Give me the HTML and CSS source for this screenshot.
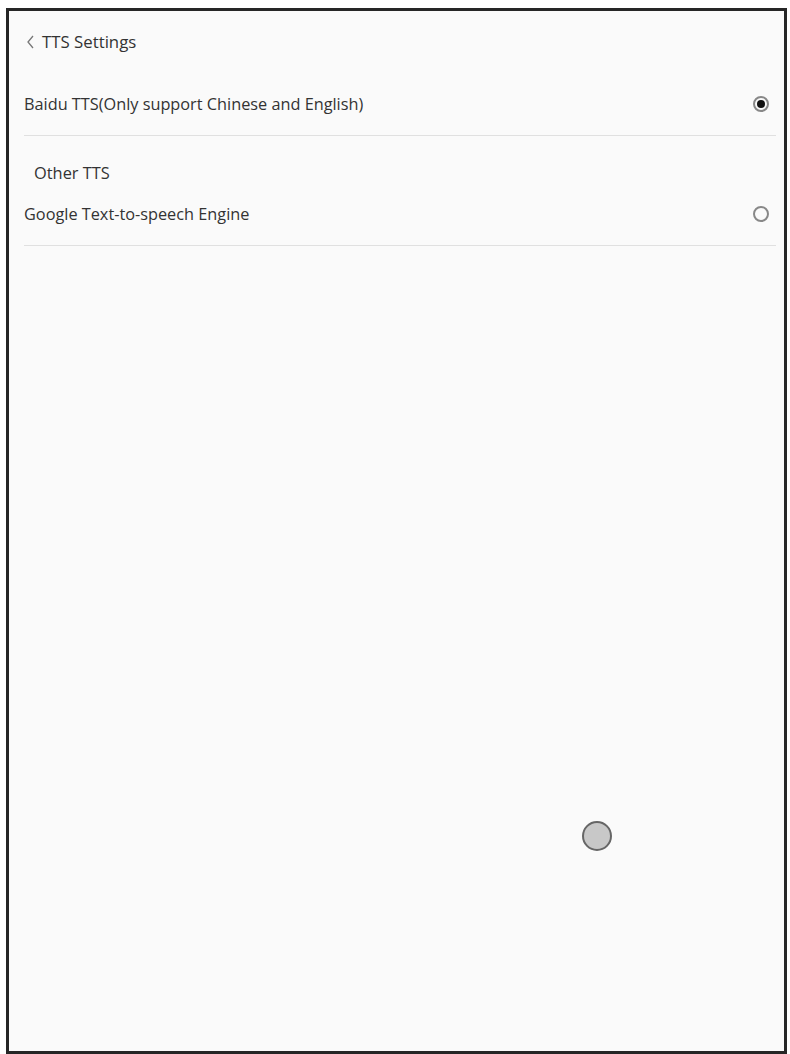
FILE: index.html
```html
<!DOCTYPE html>
<html>
<head>
<meta charset="utf-8">
<link rel="stylesheet" href="styles.css">
</head>
<body>
<div class="frame">
  <div class="header">
    <svg class="back" width="7" height="14" viewBox="0 0 7 14"><path d="M6 1 L1 7 L6 13" fill="none" stroke="#777" stroke-width="1.3"/></svg>
    <span class="title">TTS Settings</span>
  </div>
  <div class="row">
    <span class="label">Baidu TTS(Only support Chinese and English)</span>
    <span class="radio checked"></span>
  </div>
  <div class="section">Other TTS</div>
  <div class="row">
    <span class="label">Google Text-to-speech Engine</span>
    <span class="radio"></span>
  </div>
  <div class="canvas">
    <span class="touch"></span>
  </div>
</div>
</body>
</html>
```
FILE: styles.css
```css
html, body {
  margin: 0;
  padding: 0;
  background: #ffffff;
  width: 790px;
  height: 1054px;
  overflow: hidden;
}
body {
  padding: 8px 3px 0 6px;
  box-sizing: border-box;
  font-family: "Open Sans", "Noto Sans", sans-serif;
  color: #333;
}
.frame {
  height: 1046px;
  border: 3px solid #262626;
  background: #fafafa;
  box-sizing: border-box;
  display: flex;
  flex-direction: column;
  padding: 0 8px 0 15px;
}
.header {
  display: flex;
  align-items: center;
  height: 61px;
  padding-left: 3px;
  gap: 8px;
}
.title {
  font-size: 16.8px;
  color: #333;
}
.row {
  display: flex;
  align-items: center;
  justify-content: space-between;
  height: 64px;
  border-bottom: 1px solid #e0e0e0;
  padding-right: 7px;
  box-sizing: border-box;
}
.label {
  font-size: 16.3px;
  color: #333;
}
.radio {
  width: 16px;
  height: 16px;
  border-radius: 50%;
  border: 2px solid #888;
  box-sizing: border-box;
  display: flex;
  align-items: center;
  justify-content: center;
}
.radio.checked::after {
  content: "";
  width: 8px;
  height: 8px;
  border-radius: 50%;
  background: #111;
}
.section {
  font-size: 16.4px;
  color: #333;
  height: 46px;
  padding: 27px 0 0 10px;
  box-sizing: border-box;
  line-height: 20px;
}
.canvas {
  flex: 1;
  position: relative;
}
.touch {
  position: absolute;
  left: 558px;
  top: 575px;
  width: 30px;
  height: 30px;
  border-radius: 50%;
  border: 2px solid #666;
  background: #c8c8c8;
  box-sizing: border-box;
}
```
